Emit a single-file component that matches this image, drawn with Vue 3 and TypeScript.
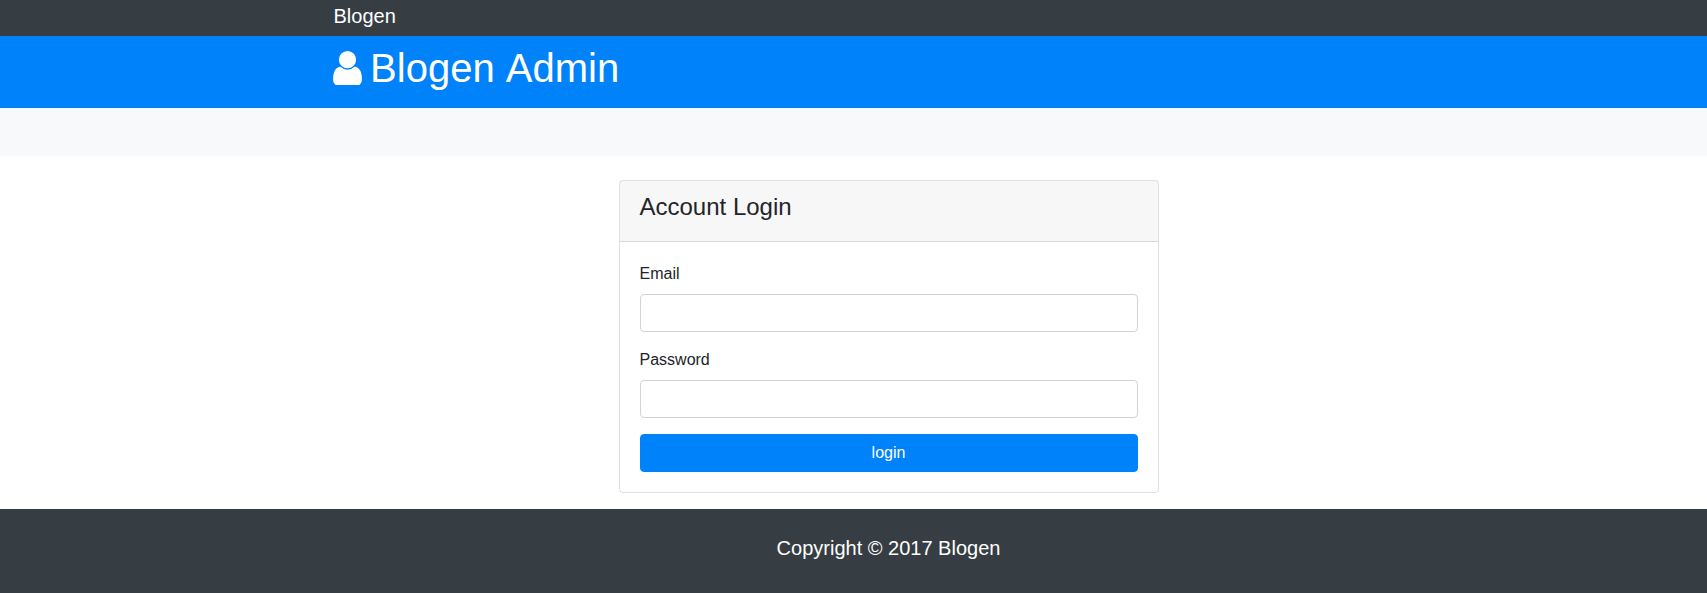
<script setup lang="ts">
import { ref } from 'vue'

const email = ref('')
const password = ref('')
</script>

<template>
  <div class="page">
    <nav class="navbar">
      <div class="container"><a class="brand">Blogen</a></div>
    </nav>
    <header class="main-header">
      <div class="container">
        <h1>
          <svg class="user" viewBox="256 128 1280 1536" aria-hidden="true">
            <path d="M1536 1399q0 109-62.500 187t-150.500 78h-854q-88 0-150.500-78t-62.500-187q0-85 8.500-160.500t31.500-152 58.500-131 94-89 134.500-34.500q131 128 313 128t313-128q76 0 134.500 34.500t94 89 58.500 131 31.500 152 8.500 160.500zm-256-887q0 159-112.500 271.500t-271.500 112.500-271.500-112.500-112.500-271.500 112.500-271.500 271.500-112.500 271.500 112.500 112.500 271.500z" />
          </svg>
          <span>Blogen Admin</span>
        </h1>
      </div>
    </header>
    <section class="actions"></section>
    <main class="container content">
      <form class="card" @submit.prevent>
        <div class="card-header"><h4>Account Login</h4></div>
        <div class="card-body">
          <div class="group">
            <label for="email">Email</label>
            <input id="email" v-model="email" type="text" />
          </div>
          <div class="group">
            <label for="password">Password</label>
            <input id="password" v-model="password" type="password" />
          </div>
          <button type="submit">login</button>
        </div>
      </form>
    </main>
    <footer><p>Copyright © 2017 Blogen</p></footer>
  </div>
</template>

<style>
body {
  margin: 0;
  overflow: hidden;
}
</style>

<style scoped>
*, *::before, *::after {
  box-sizing: border-box;
}
.page {
  width: 1777px;
  min-height: 593px;
  font: 16px/1.5 "Liberation Sans", Arial, sans-serif;
  color: #212529;
  background: #fff;
}
.container {
  width: 1140px;
  margin: 0 auto;
  padding: 0 15px;
}
.navbar {
  height: 36px;
  background: #363d43;
}
.brand {
  display: block;
  padding-top: 1px;
  font-size: 20px;
  line-height: 30px;
  color: #fff;
}
.main-header {
  height: 72px;
  padding-top: 8px;
  background: #0082fa;
  color: #fff;
}
h1 {
  display: flex;
  align-items: flex-start;
  gap: 8px;
  margin: 0;
  font-size: 40px;
  font-weight: 500;
  line-height: 48px;
  font-kerning: none;
}
.user {
  width: 29px;
  height: 34.6px;
  margin: 6.5px 0 0 -0.4px;
  fill: currentColor;
}
.actions {
  height: 48px;
  background: #f8f9fb;
}
.content {
  padding-top: 24px;
}
.card {
  width: 540px;
  margin: 0 auto;
  border: 1px solid rgba(0, 0, 0, 0.125);
  border-radius: 4px;
}
.card-header {
  padding: 12px 20px;
  background: rgba(0, 0, 0, 0.03);
  border-bottom: 1px solid rgba(0, 0, 0, 0.125);
}
h4 {
  margin: 0 0 8px;
  font-size: 24px;
  font-weight: 500;
  line-height: 28px;
}
.card-body {
  padding: 20px;
}
.group {
  margin-bottom: 16px;
}
label {
  display: block;
  margin-bottom: 8px;
}
input {
  display: block;
  width: 100%;
  height: 38px;
  padding: 6px 12px;
  border: 1px solid #ced4da;
  border-radius: 4px;
  font: inherit;
}
button {
  display: block;
  width: 100%;
  height: 38px;
  border: 1px solid #0082fa;
  border-radius: 4px;
  background: #0082fa;
  color: #fff;
  font: inherit;
}
footer {
  height: 84px;
  margin-top: 16px;
  padding-top: 24px;
  background: #363d43;
  color: #fff;
  text-align: center;
}
footer p {
  margin: 0;
  font-size: 20px;
}
</style>
